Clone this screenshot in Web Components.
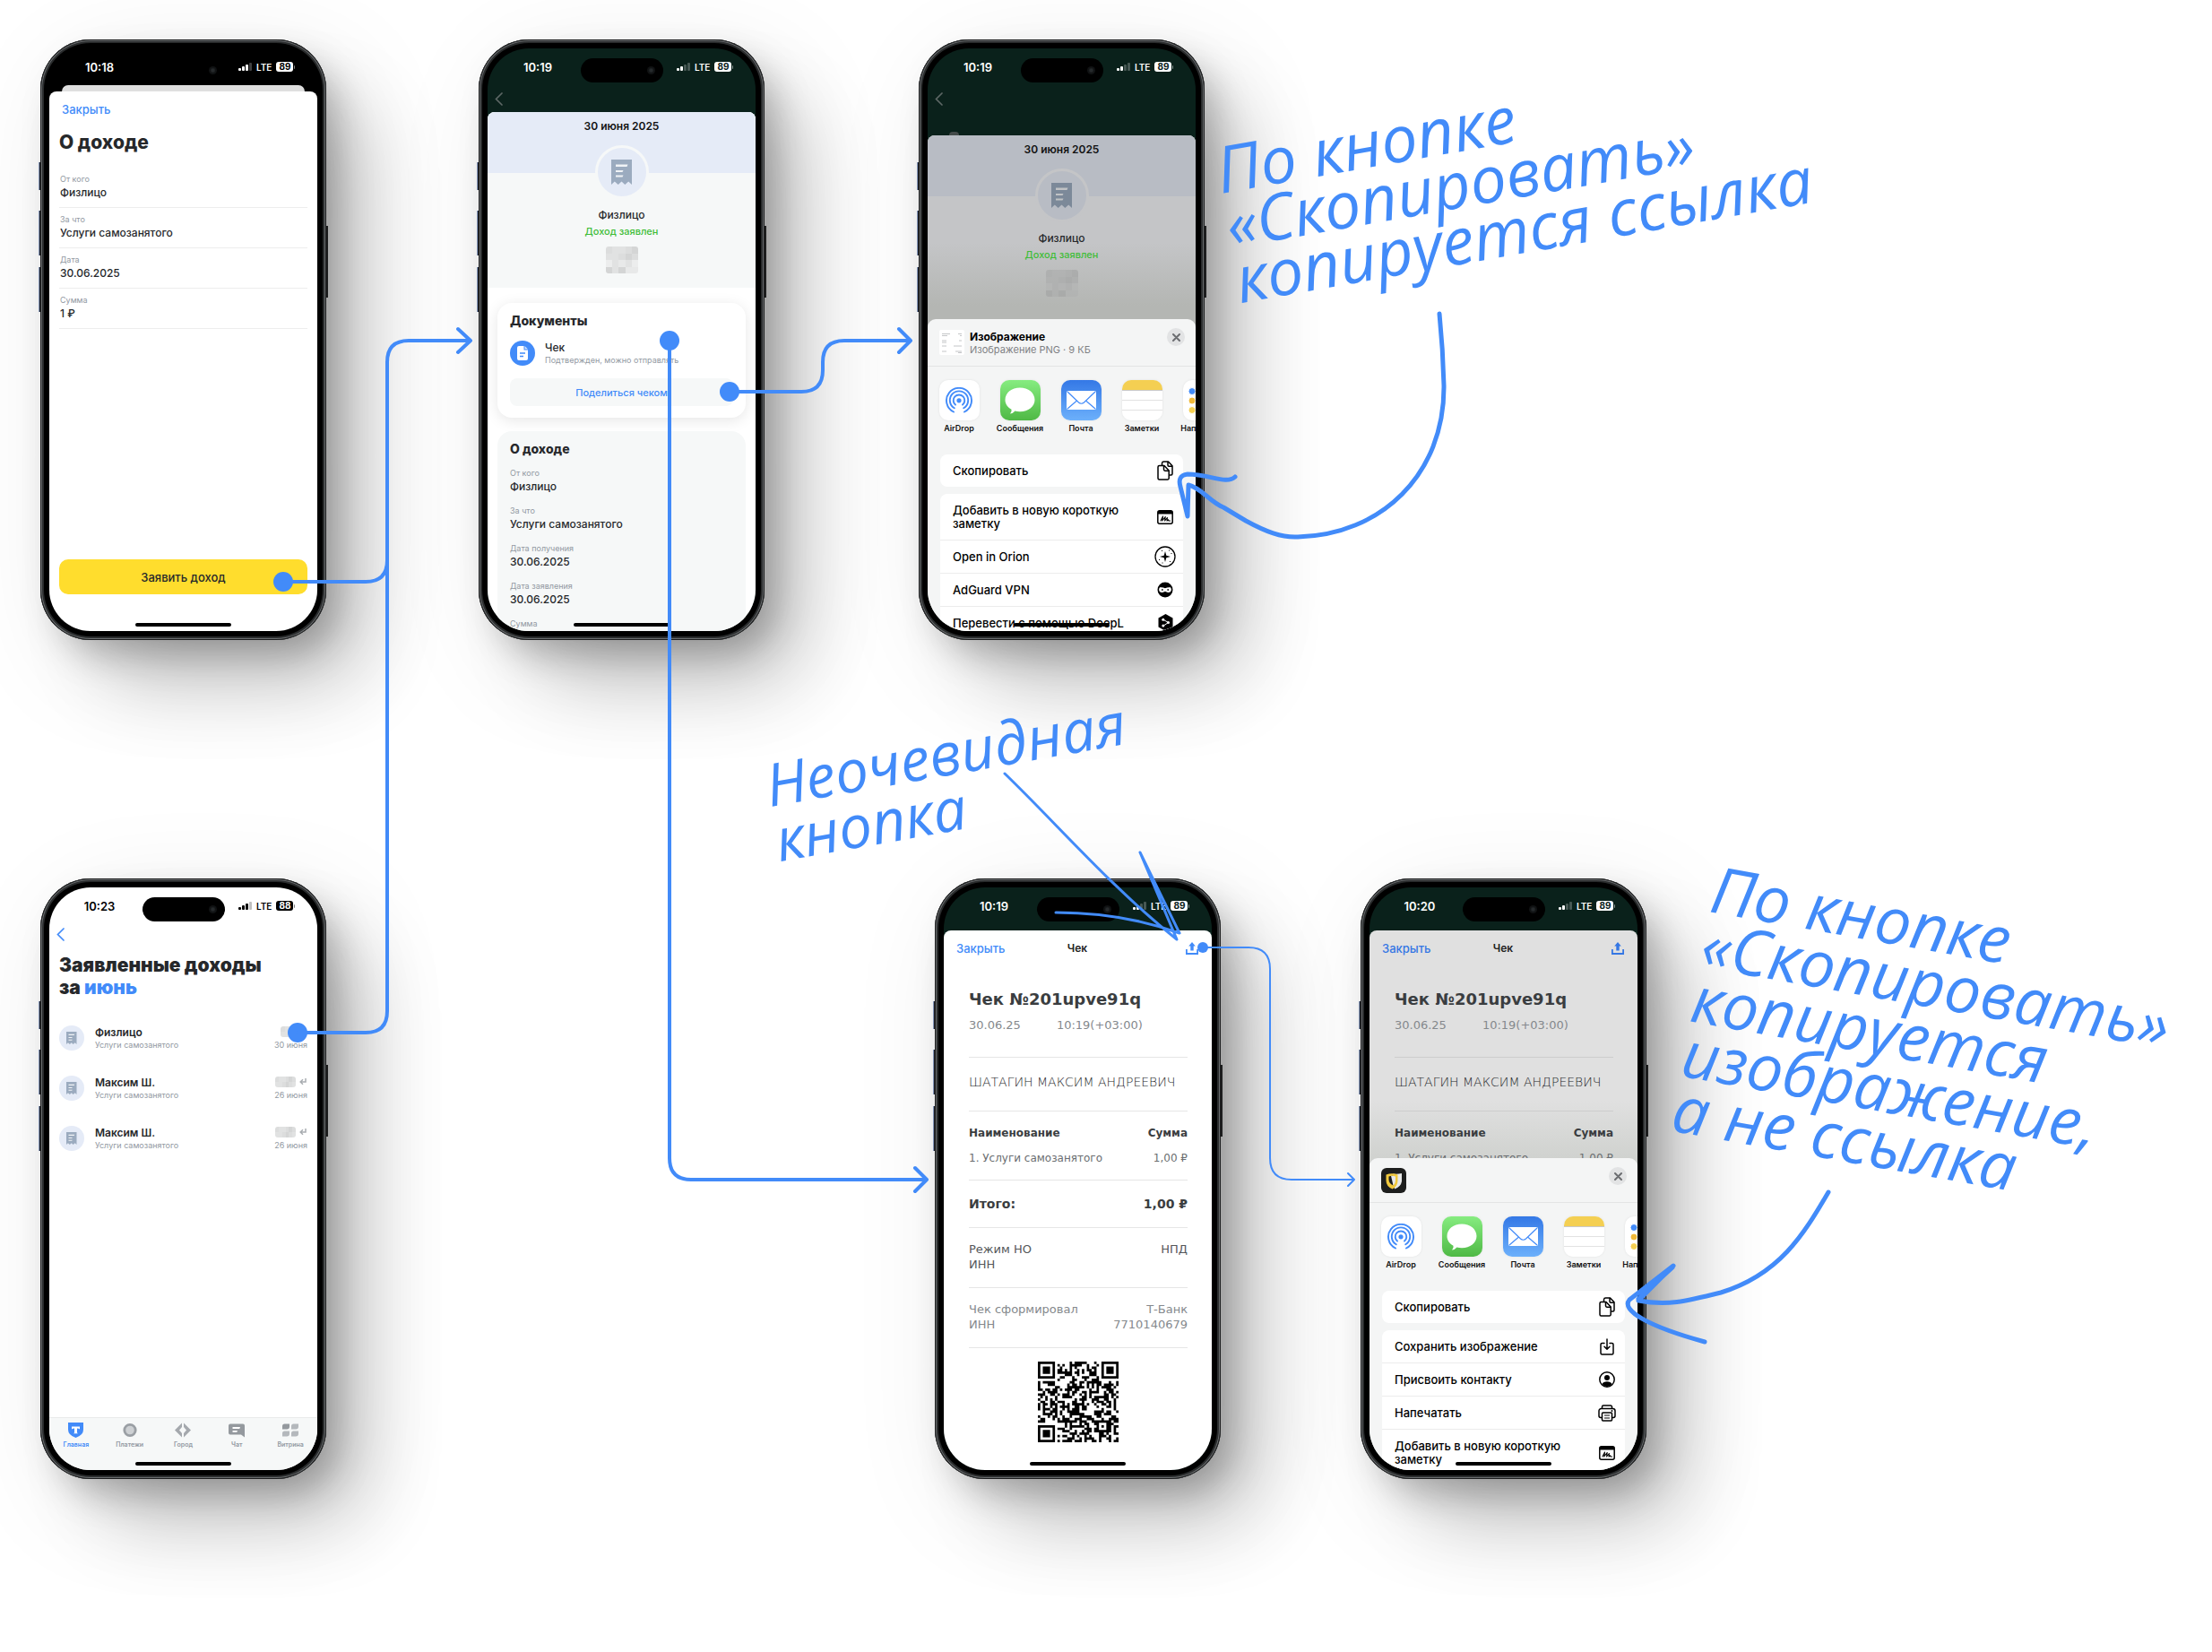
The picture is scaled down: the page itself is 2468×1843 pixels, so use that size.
<!DOCTYPE html>
<html lang="ru">
<head>
<meta charset="utf-8">
<title>Сценарий: чек самозанятого</title>
<style>
  body { margin: 0; background: #fff; font-family: Inter, "Noto Sans", sans-serif; color: #26282b; }
</style>
</head>
<body>
<flow-board>
  <phone-frame style="left:45px;top:44px" time="10:18" battery="89" bars="3" backdrop="black">
    <back-card></back-card>
    <income-form>
      <field-item ruled label="От кого">Физлицо</field-item>
      <field-item ruled label="За что">Услуги самозанятого</field-item>
      <field-item ruled label="Дата">30.06.2025</field-item>
      <field-item ruled label="Сумма">1 ₽</field-item>
    </income-form>
  </phone-frame>

  <phone-frame style="left:534px;top:44px" time="10:19" battery="89" bars="2" backdrop="green">
    <nav-back></nav-back>
    <operation-view></operation-view>
  </phone-frame>

  <phone-frame style="left:1025px;top:44px" time="10:19" battery="89" bars="2" backdrop="green">
    <nav-back tall></nav-back>
    <operation-view dim></operation-view>
    <share-sheet>
      <share-head slot="head" tall name="Изображение" meta="Изображение PNG · 9 КБ"></share-head>
      <share-action slot="first" icon="copy">Скопировать</share-action>
      <share-action icon="note" tall>Добавить в новую короткую заметку</share-action>
      <share-action icon="orion">Open in Orion</share-action>
      <share-action icon="guard">AdGuard VPN</share-action>
      <share-action icon="deepl">Перевести с помощью DeepL</share-action>
    </share-sheet>
  </phone-frame>

  <phone-frame style="left:45px;top:980px" time="10:23" battery="88" bars="3" backdrop="white">
    <nav-back blue></nav-back>
    <income-list>
      <income-row name="Физлицо" date="30 июня"></income-row>
      <income-row name="Максим Ш." date="26 июня" returned></income-row>
      <income-row name="Максим Ш." date="26 июня" returned></income-row>
    </income-list>
    <tab-bar></tab-bar>
  </phone-frame>

  <phone-frame style="left:1043px;top:980px" time="10:19" battery="89" bars="2" backdrop="green" inset>
    <receipt-view></receipt-view>
  </phone-frame>

  <phone-frame style="left:1518px;top:980px" time="10:20" battery="89" bars="2" backdrop="green" inset>
    <receipt-view dim></receipt-view>
    <share-sheet>
      <share-head slot="head"></share-head>
      <share-action slot="first" icon="copy">Скопировать</share-action>
      <share-action icon="save">Сохранить изображение</share-action>
      <share-action icon="person">Присвоить контакту</share-action>
      <share-action icon="print">Напечатать</share-action>
      <share-action icon="note" tall>Добавить в новую короткую заметку</share-action>
    </share-sheet>
  </phone-frame>

  <flow-lines></flow-lines>

  <hand-note style="left:1352px;top:158px" tilt="up"><span>По кнопке</span><span>«Скопировать»</span><span>копируется ссылка</span></hand-note>
  <hand-note style="left:849px;top:844px" tilt="up" compact><span>Неочевидная</span><span>кнопка</span></hand-note>
  <hand-note style="left:1916px;top:959px" tilt="down"><span>По кнопке</span><span>«Скопировать»</span><span>копируется</span><span>изображение,</span><span>а не ссылка</span></hand-note>
</flow-board>

<script>
const BLUE = '#428bf9';

/* Registers an element whose shadow root is cloned from one template. */
function element(name, css, html, setup) {
  const tpl = document.createElement('template');
  tpl.innerHTML = `<style>:host,*{box-sizing:border-box}button{font:inherit;color:inherit;border:0;padding:0;background:none;text-align:inherit}p,h1,h2,h3{margin:0;font:inherit}${css}</style>${html}`;
  customElements.define(name, class extends HTMLElement {
    connectedCallback() {
      if (this.shadowRoot) return;
      const root = this.attachShadow({ mode: 'open' });
      root.append(tpl.content.cloneNode(true));
      if (setup) setup(this, root);
    }
  });
}

const ICONS = {
  receipt: [23, 28, '<path fill="#9babbf" d="M0 0H23V28L19.200 24.500 15.300 28 11.500 24.500 7.700 28 3.800 24.500 0 28Z"/><path fill="#fff" opacity=".85" d="M5 5.500H18.500L17.500 8H5ZM5 12H13.500L12.500 14H5ZM5 17.500H13.500L12.500 19.500H5Z"/>'],
  doc: [12, 16, '<path fill="#fff" d="M2 0H7.500V4.500H12V14A2 2 0 0 1 10 16H2A2 2 0 0 1 0 14V2A2 2 0 0 1 2 0Z"/><path fill="#cfe1fd" d="M8.500 0 12 3.500H8.500Z"/><path stroke="#428bf9" stroke-width="1.500" d="M3 8H9M3 11.500H7"/>'],
  chevron: [9, 15, '<path fill="none" stroke="currentColor" stroke-width="1.700" stroke-linecap="round" d="M8 1 1.500 7.500 8 14"/>'],
  export: [14, 14, '<path fill="currentColor" d="M7 0 10.800 4.600H8.700V9.400H5.300V4.600H3.200Z"/><path fill="none" stroke="currentColor" stroke-width="1.800" d="M.9 8V13H13.100V8"/>'],
  close: [9, 9, '<path stroke="#6c6d71" stroke-width="2" stroke-linecap="round" d="M1 1 8 8M8 1 1 8"/>'],
  back: [8, 8, '<path fill="none" stroke="#a9adb1" stroke-width="1.500" d="M7 0V4H1.500M4 1.200 1.200 4 4 6.800"/>'],
  copy: [18, 22, '<g fill="none" stroke="#000" stroke-width="1.500" stroke-linejoin="round"><path d="M5.500 5V2.800A2 2 0 0 1 7.500 1H12.500L17 5.800V14.500A1.500 1.500 0 0 1 15.500 16H13.500"/><path d="M12 1V5Q12 6.200 13.200 6.200H17"/><path fill="#fff" d="M2.500 5.500H8L13.200 11V19.500A1.500 1.500 0 0 1 11.700 21H2.500A1.500 1.500 0 0 1 1 19.500V7A1.500 1.500 0 0 1 2.500 5.500Z"/><path d="M7.500 5.500V9.800Q7.500 11.200 8.900 11.200H13.200"/></g>'],
  note: [18, 16, '<rect x=".8" y=".8" width="16.400" height="14.400" rx="2" fill="#fff" stroke="#000" stroke-width="1.500"/><path d="M1 1H17V4.500H1Z"/><path fill="none" stroke="#000" stroke-width="1.100" stroke-linecap="round" stroke-linejoin="round" d="M4 12 6.500 7 5.800 12 9.200 7.500 8.600 12 11.400 8.500 11 12 12.600 10.800 12.800 12H14.500"/>'],
  orion: [24, 24, '<circle cx="12" cy="12" r="11" fill="#fff" stroke="#000" stroke-width="1.300"/><path d="M12 6 13.300 10.700 18 12 13.300 13.300 12 18 10.700 13.300 6 12 10.700 10.700Z"/><path d="M8 5h1v1H8ZM16 4.500h1v1h-1ZM18.500 8h1v1h-1ZM5 15h1v1H5ZM17 17h1v1h-1ZM8.500 18.500h1v1h-1Z"/>'],
  guard: [18, 18, '<circle cx="9" cy="9" r="8.500"/><path fill="#fff" d="M3 6.300Q6 5.700 9 7.300 12 5.700 15 6.300 16.800 9 15 11.200 12 12.800 9 10.800 6 12.800 3 11.200 1.200 9 3 6.300Z"/><path d="M5 8.300h1.600v1.400H5ZM11.400 8.300h1.600v1.400h-1.600Z"/>'],
  deepl: [17, 20, '<path d="M8.500 0 16.500 4.500V14.500L8.500 19 .5 14.500V4.500Z"/><path stroke="#fff" stroke-width="1" d="M5.500 6 11.500 9.500 5.500 13.500"/><g fill="#fff"><circle cx="5.800" cy="6.200" r="1.500"/><circle cx="11.500" cy="9.500" r="1.500"/><circle cx="5.800" cy="13" r="1.500"/></g>'],
  save: [16, 19, '<g fill="none" stroke="#000" stroke-width="1.500" stroke-linecap="round" stroke-linejoin="round"><path d="M5 5.500H2.500A1.500 1.500 0 0 0 1 7V16.500A1.500 1.500 0 0 0 2.500 18H13.500A1.500 1.500 0 0 0 15 16.500V7A1.500 1.500 0 0 0 13.500 5.500H11"/><path d="M8 1V12M5 9.300 8 12.300 11 9.300"/></g>'],
  person: [18, 18, '<circle cx="9" cy="9" r="8.200" fill="#fff" stroke="#000" stroke-width="1.500"/><circle cx="9" cy="7" r="3"/><path d="M3.500 14Q5 11.300 9 11.300T14.500 14Q12.300 17 9 17T3.500 14Z"/>'],
  print: [20, 19, '<g fill="none" stroke="#000" stroke-width="1.500" stroke-linejoin="round"><path d="M4 14.500H3A2 2 0 0 1 1 12.500V7A2.500 2.500 0 0 1 3.500 4.500H16.500A2.500 2.500 0 0 1 19 7V12.500A2 2 0 0 1 17 14.500H16"/><path d="M4.500 4.500V2.500A1.500 1.500 0 0 1 6 1H14A1.500 1.500 0 0 1 15.500 2.500V4.500"/><rect x="4.500" y="9" width="11" height="9" rx="1"/><path stroke-width="1.200" d="M7 12H13M7 15H13"/></g><circle cx="15.500" cy="7" r=".9"/>'],
  warden: [28, 28, '<rect width="28" height="28" rx="6" fill="#1d1e1d"/><path fill="#e9eaea" d="M13 6.500Q18 7 23 6V15Q22 21 15 23.500Z"/><path fill="#f2c93d" d="M5.500 7.500Q12 5 18.500 7.500V14Q18.500 20.500 12.500 23.500 5.500 20.500 5.500 14Z"/><path fill="#1d1e1d" d="M8.500 9.500Q12 8.500 13.500 9V19.500Q8.500 17 8.500 13Z"/><path fill="#e9eaea" d="M11 8.700Q13.500 8.500 16 9.500V14Q16 17 13.500 19.500Z"/>'],
  airdrop: [30, 30, '<g fill="none" stroke="#428bf9" stroke-width="1.900" stroke-linecap="round"><path d="M9 27.500A14 14 0 1 1 21 27.500"/><path d="M9.800 23.300A10.200 10.200 0 1 1 20.200 23.300"/><path d="M11 19.600A6.300 6.300 0 1 1 19 19.600"/></g><circle cx="15" cy="14.800" r="2.600" fill="#428bf9"/>'],
  bubble: [34, 30, '<path fill="#fff" d="M17 .5C26.300 .5 33.500 6.300 33.500 14S26.300 27.200 17 27.200Q14 27.200 11.500 26.500 9.500 29 6 29.500 8.200 27 7.500 24.800C3.200 22.500.5 18.500.5 14 .5 6.300 7.700.5 17 .5Z"/>'],
  mail: [33, 21, '<rect width="33" height="21" rx="2" fill="#fff"/><path fill="none" stroke="#428bf9" stroke-width="1.200" d="M1 1 13.500 13Q16.500 15.500 19.500 13L32 1M1 20 11.500 11M32 20 21.500 11"/>'],
  home: [17, 17, '<path fill="#428bf9" d="M0 0H17V8Q17 14 8.500 17 0 14 0 8Z"/><path fill="#fff" d="M4 4.500H13V7.500Q12 6.600 10 6.600V10.500Q10 12 11 12.200H6Q7 12 7 10.500V6.600Q5 6.600 4 7.500Z"/>'],
  pay: [16, 16, '<circle cx="8" cy="8" r="6.200" fill="#cdd0d3" stroke="#9a9fa4" stroke-width="2.800"/>'],
  city: [18, 16, '<path fill="#a4a8ad" d="M8 0V4.500L5 8 8 11.500V16L0 8Z"/><path fill="#a4a8ad" d="M10 0V4.500L13 8 10 11.500V16L18 8Z"/>'],
  chat: [18, 16, '<path fill="#94999e" d="M2 1H16A2 2 0 0 1 18 3V16L14 13H2A2 2 0 0 1 0 11V3A2 2 0 0 1 2 1Z"/><path fill="#fff" d="M4.500 4.500H13L12.300 6.500H4.500ZM4.500 8.500H10L9.300 10.300H4.500Z"/>'],
  shop: [18, 16, '<g fill="#b4b8bc"><path fill="#94999e" d="M2.500 1H8V4Q8 7 5 7H0V3.500Q0 1 2.500 1Z"/><path d="M12.500 1H18V4Q18 7 15 7H10V3.500Q10 1 12.500 1ZM2.500 9H8V12Q8 15 5 15H0V11.500Q0 9 2.500 9ZM12.500 9H18V12Q18 15 15 15H10V11.500Q10 9 12.500 9Z"/></g>'],
  sheet: [28, 28, '<rect width="28" height="28" rx="2" fill="#fff"/><path stroke="#c4c6c8" stroke-width="1" d="M3 4.500H12M21 4.500H25M3 6.500H9M23 6.500H25M3 12H8M22 12H25M3 14H8M3 18H8M16 18H25M3 24H8M18 24H25M21 25.500H25"/>']
};
function icon(name, scale = 1) {
  const [w, h, body] = ICONS[name];
  return `<svg width="${w * scale}" height="${h * scale}" viewBox="0 0 ${w} ${h}" aria-hidden="true" style="display:block;flex:none">${body}</svg>`;
}

/* Grey tiles that hide an amount. */
element('amount-mask', `
  :host{display:block;overflow:hidden;border-radius:3px} svg{display:block;width:100%;height:100%}`,
  `<svg preserveAspectRatio="none" shape-rendering="crispEdges"></svg>`, (host, root) => {
    const cols = +host.getAttribute('cols'), rows = +host.getAttribute('rows');
    const tones = ['#dcdddd', '#e8e9e9', '#d4d5d5', '#eceded', '#e1e2e2'];
    const svg = root.querySelector('svg');
    svg.setAttribute('viewBox', `0 0 ${cols} ${rows}`);
    let s = '';
    for (let y = 0; y < rows; y++) for (let x = 0; x < cols; x++)
      s += `<rect x="${x}" y="${y}" width="1" height="1" fill="${tones[(x * x * 3 + y * 4 + x * y + x) % 5]}"/>`;
    svg.innerHTML = s;
  });

element('flow-board', `:host{display:block;position:relative;min-height:1843px;overflow:hidden}`, `<slot></slot>`);

element('phone-frame', `
  :host{position:absolute;isolation:isolate;width:319px;height:670px;--fg:#fff;--bg:#000;--cut:#000}
  :host([backdrop=green]){--bg:#0a211b;--cut:#0a211b}
  :host([backdrop=white]){--bg:#fff;--fg:#000;--cut:#fff}
  .key{position:absolute;width:3px;background:#23262c;border-left:1px solid #8fa3c8}
  .k1{left:-2px;top:137px;height:31px}.k2{left:-2px;top:191px;height:50px}.k3{left:-2px;top:254px;height:50px}
  .k4{right:-2px;top:208px;height:80px;border-left:0;background:#2d2f31}
  .body{position:relative;height:100%;padding:10px;border-radius:56px;background:#000;
    box-shadow:inset 0 0 0 1px #1b1c1d,inset 0 0 0 2px #6a6d6f,inset 0 0 0 4px #2a2c2d,
      16px 20px 40px -6px rgba(0,0,0,.25),56px 60px 90px -14px rgba(0,0,0,.2),24px 30px 120px rgba(0,0,0,.1)}
  .screen{position:relative;height:100%;display:flex;flex-direction:column;overflow:hidden;border-radius:46px;background:var(--bg)}
  .status{flex:none;height:41px;display:grid;grid-template-columns:112px 1fr 88px;align-items:center;color:var(--fg);font-weight:600;font-size:13px;line-height:16px}
  :host([inset]) .status{height:48px;padding-bottom:7px}
  time{text-align:center}
  .right{grid-column:3;display:flex;align-items:center;gap:5px;font-size:10px}
  .right svg{display:block}
  .bat{position:relative;display:flex;align-items:center;justify-content:center;width:19px;height:11px;border-radius:3px;background:var(--fg);color:var(--cut);font-size:10px;font-weight:700;line-height:11px}
  .bat::after{content:"";position:absolute;right:-2px;top:4px;width:1px;height:4px;border-radius:0 1px 1px 0;background:var(--fg);opacity:.5}
  .island{position:absolute;z-index:3;top:11px;left:50%;width:92px;height:27px;margin-left:-46px;border-radius:14px;background:#000;display:flex;align-items:center;justify-content:flex-end;padding-right:9px}
  .lens{width:9px;height:9px;border-radius:50%;background:radial-gradient(#262a2c 20%,#101213 50%)}
  .homebar{position:absolute;z-index:4;bottom:5px;left:50%;width:107px;height:4px;margin-left:-54px;border-radius:2px;background:#000}`,
  `<i class="key k1"></i><i class="key k2"></i><i class="key k3"></i><i class="key k4"></i>
   <div class="body"><div class="screen">
     <div class="status"><time></time><div class="right"><svg width="15" height="9" viewBox="0 0 15 9"></svg><span>LTE</span><span class="bat"></span></div></div>
     <slot></slot>
     <div class="island"><i class="lens"></i></div><i class="homebar"></i>
   </div></div>`, (host, root) => {
    root.querySelector('time').textContent = host.getAttribute('time');
    root.querySelector('.bat').textContent = host.getAttribute('battery');
    const on = +host.getAttribute('bars');
    root.querySelector('.right svg').innerHTML = [3, 5, 7, 9].map((h, i) =>
      `<rect x="${i * 4}" y="${9 - h}" width="3" height="${h}" rx="1" fill="${host.getAttribute('backdrop') === 'white' ? '#000' : '#fff'}" opacity="${i < on ? 1 : .25}"/>`).join('');
  });

element('back-card', `:host{display:block;flex:none;height:7px;margin:0 14px;border-radius:7px 7px 0 0;background:#dfdfdf}`, ``);

element('nav-back', `
  :host{display:flex;flex:none;height:30px;align-items:flex-start;color:#5d6765;position:relative}
  :host([tall]){height:56px}
  :host([blue]){height:24px;color:${BLUE}}
  button{margin:8px 0 0 8px;display:block}
  :host([blue]) button{margin:4px 0 0 8px}
  i{display:none;position:absolute;bottom:0;left:24px;width:11px;height:4px;border-radius:6px 6px 0 0;background:#444b4a}
  :host([tall]) i{display:block}`,
  `<button aria-label="Назад">${icon('chevron')}</button><i></i>`);

element('field-item', `
  :host{display:block}
  small{display:block;font-size:9px;line-height:12px;color:#9299a2}
  b{display:block;font-weight:500;font-size:12px;line-height:16px;margin-top:1px;color:#26282b}
  :host([ruled]){padding:7px 1px 8px;border-bottom:1px solid #ededed}`,
  `<small></small><b><slot></slot></b>`, (h, r) => r.querySelector('small').textContent = h.getAttribute('label'));

element('income-form', `
  :host{flex:1;display:flex;flex-direction:column;min-height:0;padding:12px 11px 41px;border-radius:8px 8px 0 0;background:#fff}
  .close{align-self:flex-start;margin-left:3px;font-size:13px;line-height:16px;font-weight:500;color:${BLUE}}
  h1{margin:16px 0 15px;font-size:21px;line-height:26px;font-weight:800}
  .submit{margin-top:auto;height:39px;border-radius:10px;background:#ffdd2d;text-align:center;font-size:13px;font-weight:500;color:#26282b}`,
  `<button class="close">Закрыть</button><h1>О доходе</h1><slot></slot><button class="submit">Заявить доход</button>`);

element('operation-view', `
  :host{flex:1;min-height:0;overflow:hidden;display:block;border-radius:8px 8px 0 0;background:#fff;--hero:#e5ebf7;--body:#f6f8f8;--ring:#f6f8f8}
  :host([dim]){--hero:#b8bcc4;--body:#c4c5c7;--ring:#c4c5c7;background:#b4b6b3}
  .top{display:flex;flex-direction:column;align-items:center;padding:8px 0 16px;background:linear-gradient(var(--hero) 68px,transparent 68px),var(--body)}
  :host([dim]) .top{background:linear-gradient(var(--hero) 68px,transparent 68px),linear-gradient(#c4c5c7 120px,#b4b6b3 190px)}
  h2{font-size:12px;line-height:16px;font-weight:600;color:#111}
  .badge{width:60px;height:60px;margin-top:13px;border-radius:50%;border:3px solid var(--ring);background:var(--hero);display:flex;align-items:center;justify-content:center}
  :host([dim]) .badge svg{filter:brightness(.8)}
  .who{margin-top:10px;font-size:12px;line-height:16px;font-weight:500}
  .ok{margin-top:2px;font-size:11px;line-height:16px;font-weight:500;color:#3fbd38}
  amount-mask{width:36px;height:30px;margin-top:9px}
  :host([dim]) amount-mask{opacity:.6;filter:brightness(.76)}
  section{margin:0 11px;border-radius:16px;padding:11px 14px 13px}
  .docs{margin-top:17px;background:#fff;box-shadow:0 3px 16px rgba(0,0,0,.1)}
  .about{margin-top:15px;background:#f6f8f8}
  h3{font-size:14px;line-height:18px;font-weight:800}
  .doc{display:flex;align-items:center;gap:11px;margin:13px 0 14px}
  .disc{width:28px;height:28px;flex:none;border-radius:50%;background:${BLUE};display:flex;align-items:center;justify-content:center}
  .doc b{display:block;font-size:12px;line-height:15px;font-weight:500}
  .doc small{display:block;font-size:9px;line-height:13px;color:#9299a2;white-space:nowrap}
  .share{display:block;width:100%;height:31px;border-radius:8px;background:#f6f8f8;color:${BLUE};font-size:11px;font-weight:500;text-align:center}
  .fields{display:flex;flex-direction:column;gap:13px;margin-top:12px}`,
  `<div class="top"><h2>30 июня 2025</h2><div class="badge">${icon('receipt')}</div>
    <p class="who">Физлицо</p><p class="ok">Доход заявлен</p><amount-mask cols="5" rows="4"></amount-mask></div>
   <section class="docs"><h3>Документы</h3>
    <div class="doc"><span class="disc">${icon('doc')}</span><span><b>Чек</b><small>Подтвержден, можно отправлять</small></span></div>
    <button class="share">Поделиться чеком</button></section>
   <section class="about"><h3>О доходе</h3><div class="fields">
    <field-item label="От кого">Физлицо</field-item>
    <field-item label="За что">Услуги самозанятого</field-item>
    <field-item label="Дата получения">30.06.2025</field-item>
    <field-item label="Дата заявления">30.06.2025</field-item>
    <field-item label="Сумма"></field-item></div></section>`,
  (h, r) => { if (h.hasAttribute('dim')) r.querySelectorAll('section').forEach(s => s.remove()); });

element('share-head', `
  :host{display:flex;align-items:flex-start;gap:6px;height:50px;padding:11px 12px 0 13px;border-bottom:1px solid #e3e4e4}
  :host([tall]){height:53px;padding-top:12px}
  .txt{flex:1}
  b{display:block;font-size:12px;line-height:15px;font-weight:700;color:#000}
  small{display:block;font-size:11px;line-height:15px;color:#7f8184}
  button{width:20px;height:20px;margin-top:-1px;border-radius:50%;background:#e2e3e4;display:flex;align-items:center;justify-content:center}
  :host([tall]) button{margin-top:-2px}`,
  `<span class="pic"></span><div class="txt"></div><button aria-label="Закрыть">${icon('close')}</button>`, (h, r) => {
    const name = h.getAttribute('name');
    r.querySelector('.pic').innerHTML = icon(name ? 'sheet' : 'warden');
    if (name) r.querySelector('.txt').innerHTML = `<b>${name}</b><small>${h.getAttribute('meta')}</small>`;
  });

element('share-app', `
  :host{display:block;flex:none;width:68px;text-align:center;font-size:9px;line-height:12px;font-weight:600;color:#111}
  .tile{width:45px;height:45px;margin:0 auto 3px;border-radius:10px;display:flex;align-items:center;justify-content:center;overflow:hidden;background:#fff;box-shadow:0 0 3px rgba(0,0,0,.08)}
  :host([kind=bubble]) .tile{background:linear-gradient(#86ec80,#4fb945)}
  :host([kind=mail]) .tile{background:linear-gradient(#3478e6,#6cb0fb)}
  :host([kind=notes]) .tile{background:linear-gradient(#f4cf52 11px,#c9c9c9 11px,#c9c9c9 12px,#fff 12px,#fff 22px,#e2e2e2 22px,#e2e2e2 23px,#fff 23px,#fff 33px,#e2e2e2 33px,#e2e2e2 34px,#fff 34px)}
  :host([kind=todo]) .tile{justify-content:flex-start;padding-left:6px}
  button{display:block;width:100%;text-align:center}`,
  `<button><span class="tile"></span><slot></slot></button>`, (h, r) => {
    const kind = h.getAttribute('kind'), tile = r.querySelector('.tile');
    if (ICONS[kind]) tile.innerHTML = icon(kind);
    if (kind === 'todo') tile.innerHTML = '<svg width="36" height="30" viewBox="0 0 36 30"><g stroke="#fff" stroke-width="1"><circle cx="4" cy="4.500" r="4" fill="#428bf9"/><circle cx="4" cy="15" r="4" fill="#f0b93a"/><circle cx="4" cy="25.500" r="4" fill="#f4cf52"/></g><path stroke="#ddd" d="M12 4.500H30M12 15H30M12 25.500H30"/></svg>';
  });

element('share-action', `
  :host{display:block;border-bottom:1px solid #ececec}
  :host([slot=first]){border:0}
  button{display:flex;align-items:center;justify-content:space-between;width:100%;height:36px;padding:0 8px 0 14px;font-size:13px;line-height:15px;font-weight:500;color:#000}
  :host([tall]) button{height:51px}
  .ic{width:24px;flex:none;display:flex;justify-content:center}
  .t{max-width:200px}`,
  `<button><span class="t"><slot></slot></span><span class="ic"></span></button>`,
  (h, r) => r.querySelector('.ic').innerHTML = icon(h.getAttribute('icon')));

element('share-sheet', `
  :host{position:absolute;z-index:2;inset:302px 0 0;overflow:hidden;border-radius:9px 9px 0 0;background:#f4f5f5}
  .apps{display:flex;padding:15px 0 0 1px;height:98px;overflow:hidden}
  .card{margin:0 14px 8px;border-radius:8px;background:#fff;overflow:hidden}`,
  `<slot name="head"></slot>
   <div class="apps"><share-app kind="airdrop">AirDrop</share-app><share-app kind="bubble">Сообщения</share-app><share-app kind="mail">Почта</share-app><share-app kind="notes">Заметки</share-app><share-app kind="todo">Напомин…</share-app></div>
   <div class="card"><slot name="first"></slot></div><div class="card"><slot></slot></div>`);

element('income-row', `
  :host{display:flex;align-items:center;gap:12px;height:28px}
  .disc{flex:none;width:28px;height:28px;border-radius:50%;background:#e5ebf7;display:flex;align-items:center;justify-content:center}
  .who{flex:1}
  b{display:block;font-size:12px;line-height:15px;font-weight:600}
  small{display:block;font-size:9px;line-height:14px;color:#9299a2}
  .sum{height:15px;display:flex;align-items:center;justify-content:flex-end;gap:4px;padding-right:1px}
  amount-mask{width:23px;height:12px}
  .sum:not(.ret) amount-mask{width:29px}`,
  `<span class="disc">${icon('receipt', .5)}</span><span class="who"><b></b><small>Услуги самозанятого</small></span>
   <span><span class="sum"><amount-mask cols="6" rows="2"></amount-mask></span><small class="date"></small></span>`, (h, r) => {
    r.querySelector('b').textContent = h.getAttribute('name');
    r.querySelector('.date').textContent = h.getAttribute('date');
    if (h.hasAttribute('returned')) {
      const s = r.querySelector('.sum'); s.classList.add('ret'); s.insertAdjacentHTML('beforeend', icon('back'));
    }
  });

element('income-list', `
  :host{flex:1;min-height:0;padding:9px 11px 0;display:flex;flex-direction:column;gap:28px}
  h1{font-size:21px;line-height:25px;font-weight:900;margin-bottom:2px;white-space:nowrap}
  a{color:${BLUE};text-decoration:none}`,
  `<h1>Заявленные доходы<br>за <a href="#month">июнь</a></h1><slot></slot>`);

element('tab-bar', `
  :host{display:block;flex:none;height:59px;background:#f6f8f8;border-top:1px solid #e9ebeb}
  nav{display:flex;padding-top:5px}
  a{flex:1;display:flex;flex-direction:column;align-items:center;gap:3px;height:40px;text-decoration:none;font-size:7px;line-height:9px;font-weight:600;color:#9299a2}
  a svg{height:17px}
  a.on{color:${BLUE}}`,
  `<nav><a class="on" href="#home">${icon('home')}Главная</a><a href="#pay">${icon('pay')}Платежи</a><a href="#city">${icon('city')}Город</a><a href="#chat">${icon('chat')}Чат</a><a href="#shop">${icon('shop')}Витрина</a></nav>`);

element('qr-code', `:host{display:block;width:90px;height:90px}svg{display:block;width:100%;height:100%}`,
  `<svg viewBox="0 0 33 33"><path/></svg>`, (h, r) => {
    const N = 33;
    const ring = (x, y, cx, cy) => Math.max(Math.abs(x - cx), Math.abs(y - cy));
    let seed = 77101, d = '';
    for (let y = 0; y < N; y++) for (let x = 0; x < N; x++) {
      seed = (seed * 1103515245 + 12345) % 2147483648;
      let on = (seed / 65536 & 7) < 4;
      for (const [cx, cy] of [[3, 3], [29, 3], [3, 29]]) {
        const k = ring(x, y, cx, cy);
        if (k <= 4) on = k === 3 || k <= 1;
      }
      const a = ring(x, y, 26, 26);
      if (a <= 2) on = a !== 1;
      if (on) d += `M${x} ${y}h1v1h-1z`;
    }
    r.querySelector('path').setAttribute('d', d);
  });

element('receipt-view', `
  :host{flex:1;min-height:0;overflow:hidden;display:block;border-radius:8px 8px 0 0;background:#fff;color:#3a3d40;--rule:#e6e6e6}
  :host([dim]){background:linear-gradient(#e0e0e0 190px,#d0d2cf 254px);--rule:#cdcdcd}
  header{display:grid;grid-template-columns:1fr auto 1fr;align-items:center;padding:12px 15px 0 14px;font-size:13px;line-height:16px;font-weight:500;color:${BLUE}}
  :host([dim]) header{color:#3577e4}
  h1{font-size:12px;font-weight:600;color:#222}
  .x{justify-self:end;display:block}
  .paper{margin:38px 27px 0 28px;font-family:"DejaVu Sans",sans-serif;font-size:12px;line-height:16px}
  h2{font-weight:700;font-size:18px;line-height:22px;white-space:nowrap}
  .when{display:flex;gap:40px;margin-top:10px;padding-bottom:27px;font-size:13px;color:#85898d}
  .rule{border-bottom:1px solid var(--rule)}
  .name{padding:19px 0 24px;font-size:14px;font-weight:200;white-space:nowrap;color:#26282b}
  table{width:100%;border-collapse:collapse}
  th,td{padding:0;text-align:left;font-weight:400}
  th:last-child,td:last-child{text-align:right}
  .items th{padding-top:16px;font-weight:700}
  .items td{padding:12px 0 16px;color:#6b6e71}
  .total td{font-weight:700;font-size:14px;padding:18px 0}
  .tax td{line-height:17px;font-size:13px}
  .tax{color:#55585b}.op{color:#85898d}
  .pad{padding:15px 0 17px}
  qr-code{margin:15px auto 0}`,
  `<header><button>Закрыть</button><h1>Чек</h1><button class="x" aria-label="Поделиться">${icon('export')}</button></header>
   <div class="paper"><h2>Чек №201upve91q</h2>
    <div class="when rule"><span>30.06.25</span><span>10:19(+03:00)</span></div>
    <p class="name rule">ШАТАГИН МАКСИМ АНДРЕЕВИЧ</p>
    <div class="rule"><table class="items"><tr><th>Наименование</th><th>Сумма</th></tr><tr><td>1. Услуги самозанятого</td><td>1,00 ₽</td></tr></table></div>
    <div class="rule rest"><table class="total"><tr><td>Итого:</td><td>1,00 ₽</td></tr></table></div>
    <div class="rule rest pad"><table class="tax"><tr><td>Режим НО</td><td>НПД</td></tr><tr><td>ИНН</td><td></td></tr></table></div>
    <div class="rule rest pad"><table class="tax op"><tr><td>Чек сформировал</td><td>Т-Банк</td></tr><tr><td>ИНН</td><td>7710140679</td></tr></table></div>
    <qr-code class="rest"></qr-code></div>`,
  (h, r) => { if (h.hasAttribute('dim')) r.querySelectorAll('.rest').forEach(s => s.remove()); });

element('hand-note', `
  :host{position:absolute;display:block;transform-origin:0 0;color:${BLUE};font-family:"Open Sans","Noto Sans",sans-serif;font-style:italic;font-size:72px;line-height:62px;white-space:nowrap}
  :host([compact]){font-size:66px}
  :host([tilt=up]){transform:rotate(-10deg)}
  :host([tilt=down]){transform:rotate(10deg)}
  ::slotted(span){display:block}`, `<slot></slot>`);

element('flow-lines', `
  :host{position:absolute;inset:0;pointer-events:none}
  svg{display:block;width:100%;height:100%;overflow:visible}
  g{fill:none;stroke:${BLUE};stroke-width:4;stroke-linecap:round;stroke-linejoin:round}
  .thin{stroke-width:2}.pen{stroke-width:5}.fine{stroke-width:3}
  circle{fill:${BLUE};stroke:none}`,
  `<svg aria-hidden="true">
    <g><circle cx="316" cy="649" r="11"/><circle cx="332" cy="1152" r="11"/><circle cx="747" cy="380" r="11"/><circle cx="814" cy="437" r="11"/>
     <path d="M316 649H408Q432 649 432 625"/>
     <path d="M332 1152H408Q432 1152 432 1128V404Q432 380 456 380H524M511 367 525 380 511 393"/>
     <path d="M747 380V1292Q747 1316 771 1316H1034M1021 1303 1034 1316 1021 1329"/>
     <path d="M814 437H894Q918 437 918 413V404Q918 380 942 380H1015M1003 367 1016 380 1003 393"/></g>
    <g class="thin"><circle cx="1342" cy="1057" r="6"/><path d="M1342 1057H1393Q1417 1057 1417 1081V1292Q1417 1316 1441 1316H1511M1504 1309 1511 1316 1504 1323"/></g>
    <g class="pen"><path d="M1378 532C1368 541 1350 529 1325 529C1316 530 1315 536 1317 543L1325 576 1326 541C1340 544 1350 560 1365 566L1390 581C1412 593 1430 600 1448 599C1540 597 1612 530 1611 430Q1610 390 1606 350"/>
     <path d="M2040 1330C2012 1378 1985 1422 1920 1442C1880 1452 1860 1457 1828 1451L1867 1412L1818 1450C1808 1462 1840 1480 1902 1497M1828 1449 1866 1414"/></g>
    <g class="fine"><path d="M1121 863C1180 920 1240 990 1313 1048L1272 951 1316 1041C1280 1028 1235 1018 1178 1018"/></g>
  </svg>`);
</script>
</body>
</html>
